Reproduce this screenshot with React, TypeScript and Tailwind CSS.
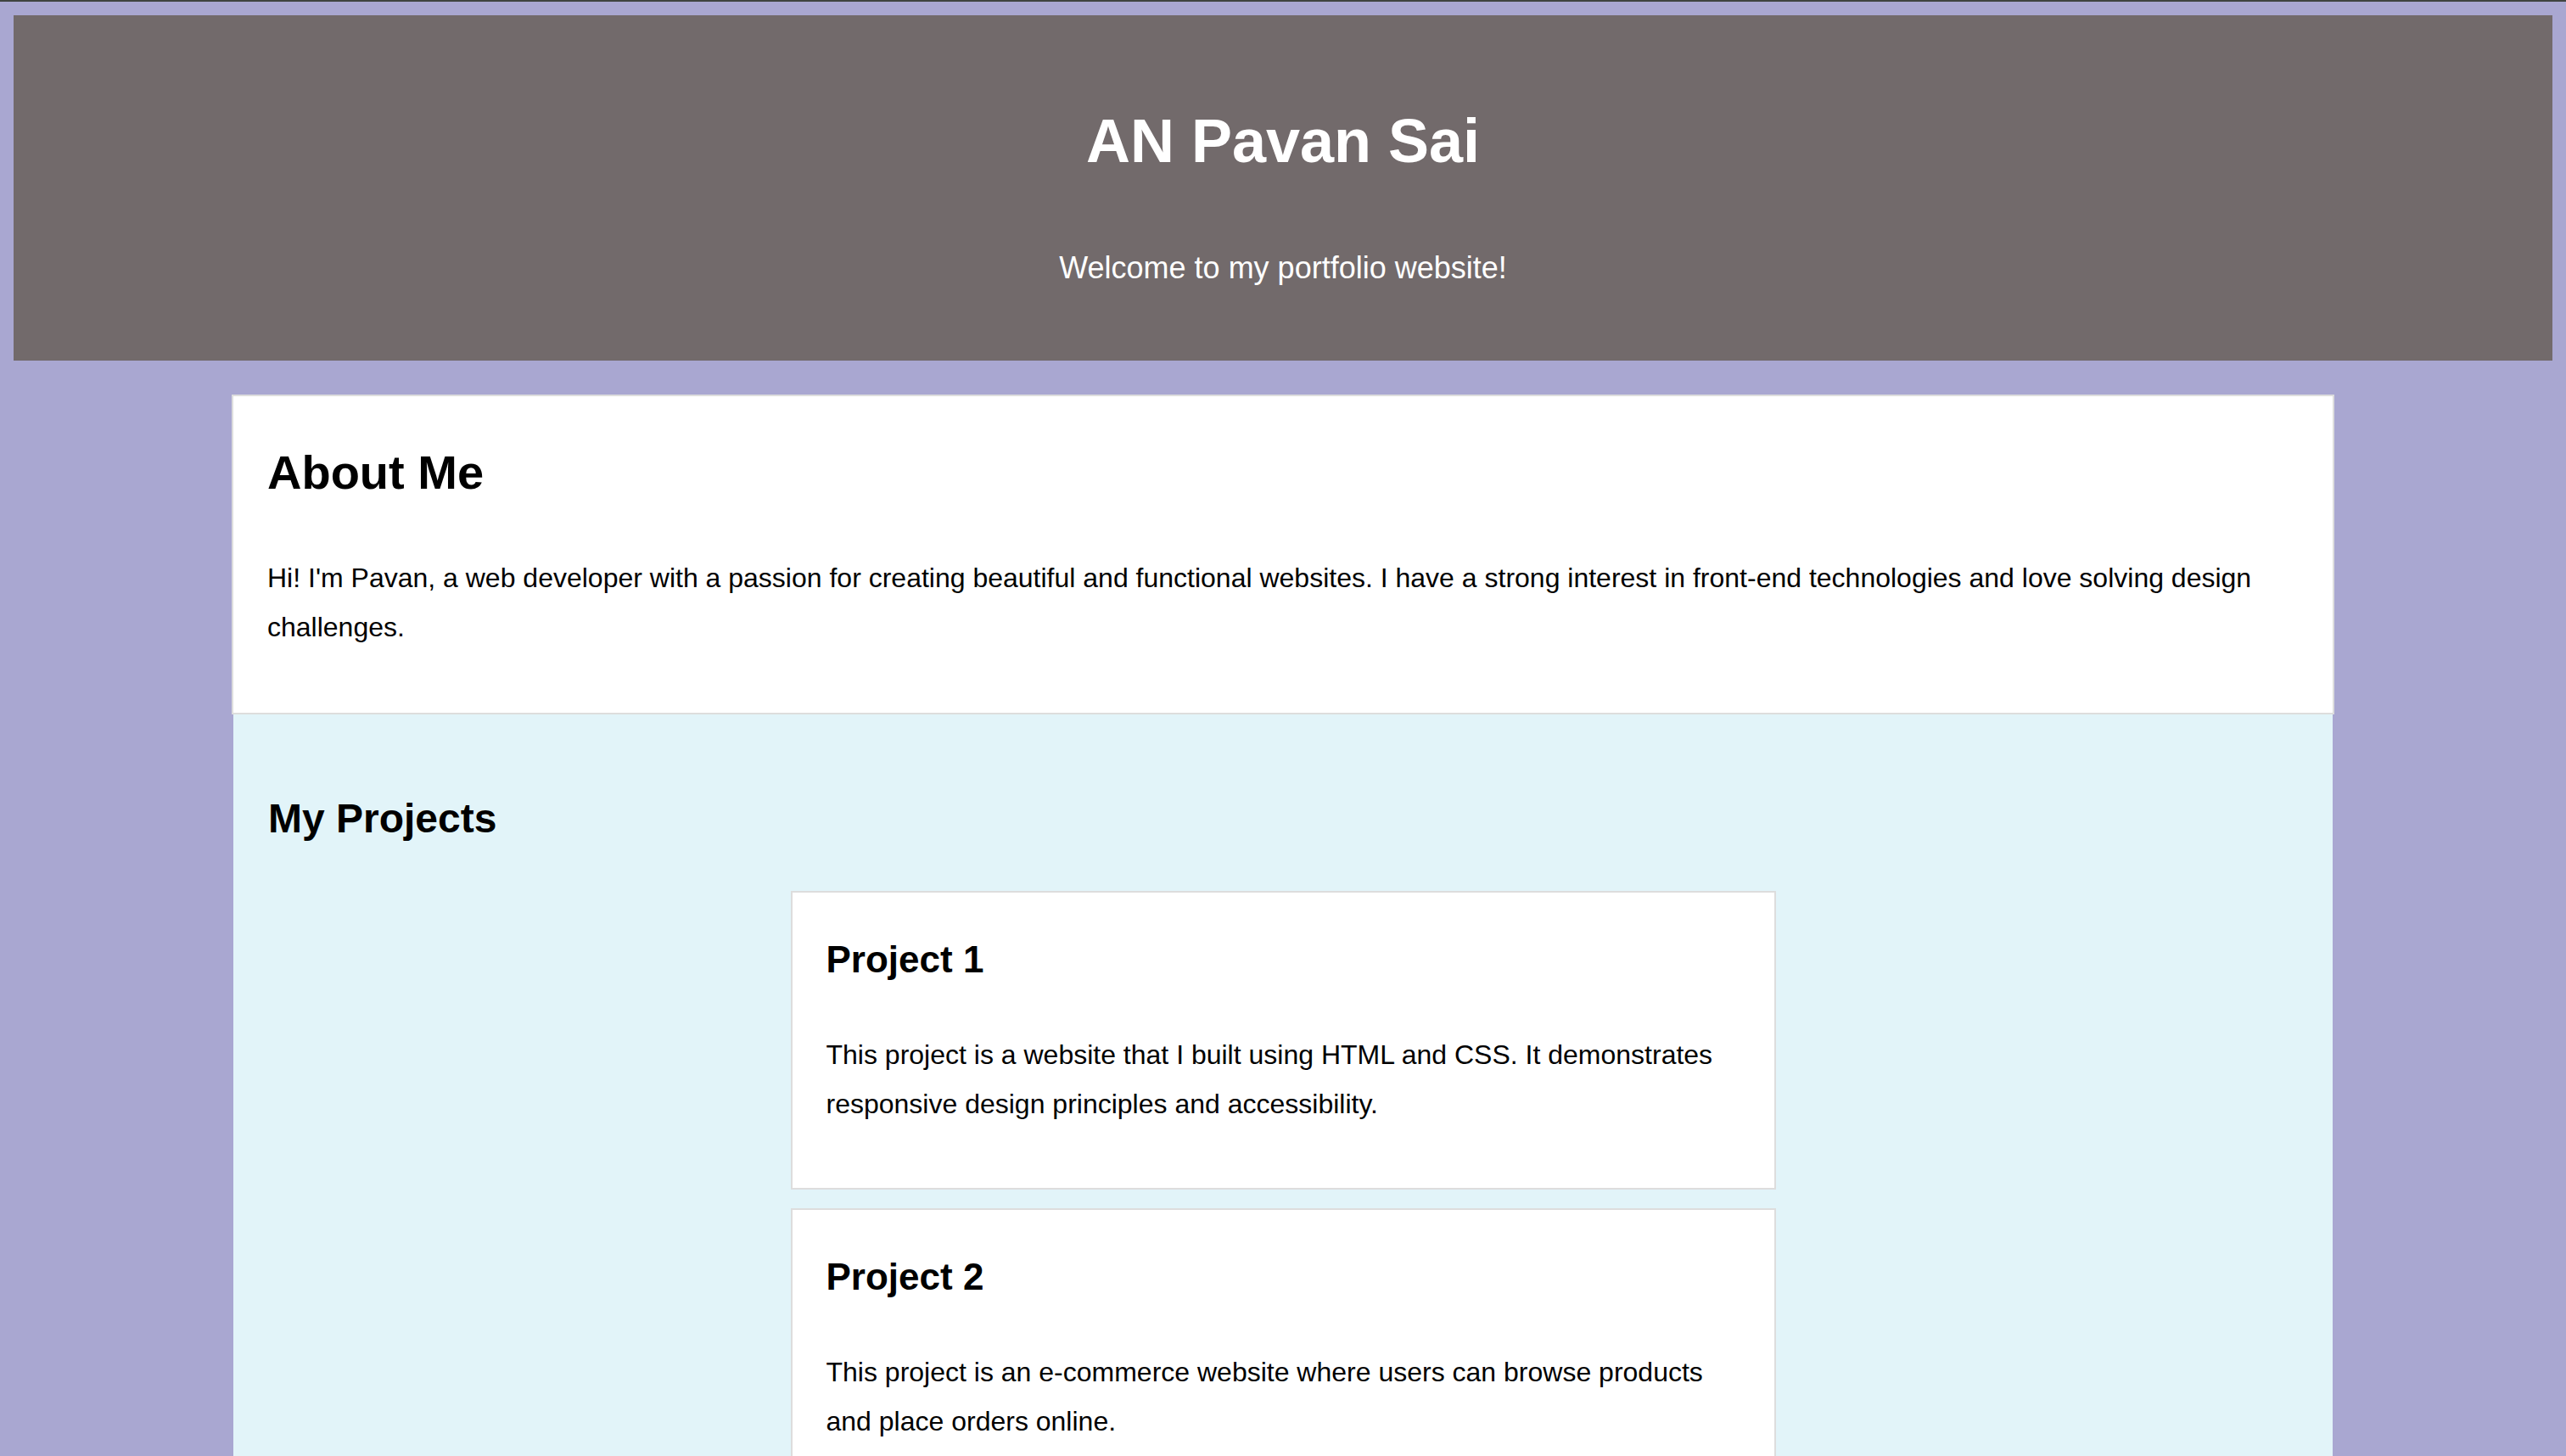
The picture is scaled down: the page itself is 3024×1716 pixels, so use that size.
export default function App() {
  const projects = [
    {
      title: "Project 1",
      text: "This project is a website that I built using HTML and CSS. It demonstrates responsive design principles and accessibility.",
    },
    {
      title: "Project 2",
      text: "This project is an e-commerce website where users can browse products and place orders online.",
    },
  ];

  return (
    <div className="min-h-screen bg-[#a9a7d1] font-['Liberation_Sans',Arial,sans-serif] text-black">
      <div className="h-[2px] bg-[#3f4440]" />
      <div className="px-[16px] pt-[16px]">
        <header className="bg-[#726a6b] pt-[107px] pb-[89px] text-center text-white">
          <h1 className="text-[72px] font-bold leading-[83px]">AN Pavan Sai</h1>
          <p className="mt-[87px] text-[36px] leading-[41px]">
            Welcome to my portfolio website!
          </p>
        </header>
      </div>

      <main className="mt-[40px]">
        <section className="mx-auto w-[2478px] border-2 border-[#dddddd] bg-white px-[40px] pt-[58px] pb-[72px]">
          <h2 className="text-[56px] font-bold leading-[64px]">About Me</h2>
          <p className="mt-[64px] text-[32px] leading-[57.6px]">
            Hi! I'm Pavan, a web developer with a passion for creating beautiful
            and functional websites. I have a strong interest in front-end
            technologies and love solving design challenges.
          </p>
        </section>

        <section className="mx-auto w-[2474px] bg-[#e2f4f9] px-[41px] pt-[95px] pb-[80px]">
          <h2 className="text-[48px] font-bold leading-[55px]">My Projects</h2>
          <div className="mt-[58px] flex flex-col items-center gap-[22px]">
            {projects.map((p) => (
              <div
                key={p.title}
                className="w-[1161px] border-2 border-[#dddddd] bg-white px-[40px] pt-[53px] pb-[70px]"
              >
                <h3 className="text-[44px] font-bold leading-[51px]">{p.title}</h3>
                <p className="mt-[59px] text-[32px] leading-[57.6px]">{p.text}</p>
              </div>
            ))}
          </div>
        </section>
      </main>
    </div>
  );
}
